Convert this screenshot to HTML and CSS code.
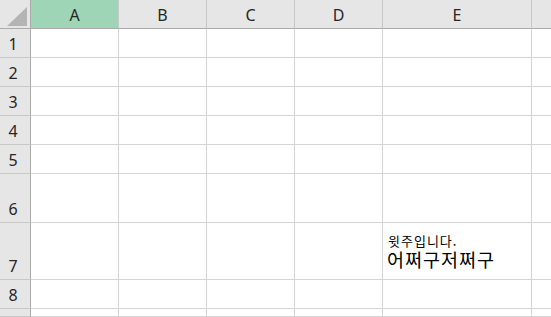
FILE: index.html
```html
<!doctype html>
<html lang="ko">
  <head>
    <meta charset="UTF-8" />
    <title>Sheet</title>
    <link rel="stylesheet" href="styles.css">
  </head>
  <body>
    <div class="sheet">
      <div class="corner"><span class="tri"></span></div>
      <div class="colhead active">A</div>
      <div class="colhead">B</div>
      <div class="colhead">C</div>
      <div class="colhead">D</div>
      <div class="colhead">E</div>
      <div class="colhead"></div>

      <div class="rowhead">1</div>
      <div class="cell"></div><div class="cell"></div><div class="cell"></div><div class="cell"></div><div class="cell"></div><div class="cell"></div>
      <div class="rowhead">2</div>
      <div class="cell"></div><div class="cell"></div><div class="cell"></div><div class="cell"></div><div class="cell"></div><div class="cell"></div>
      <div class="rowhead">3</div>
      <div class="cell"></div><div class="cell"></div><div class="cell"></div><div class="cell"></div><div class="cell"></div><div class="cell"></div>
      <div class="rowhead">4</div>
      <div class="cell"></div><div class="cell"></div><div class="cell"></div><div class="cell"></div><div class="cell"></div><div class="cell"></div>
      <div class="rowhead">5</div>
      <div class="cell"></div><div class="cell"></div><div class="cell"></div><div class="cell"></div><div class="cell"></div><div class="cell"></div>
      <div class="rowhead">6</div>
      <div class="cell"></div><div class="cell"></div><div class="cell"></div><div class="cell"></div><div class="cell"></div><div class="cell"></div>
      <div class="rowhead">7</div>
      <div class="cell"></div><div class="cell"></div><div class="cell"></div><div class="cell"></div>
      <div class="cell text">
        <span class="ruby">윗주입니다.</span>
        <span class="main">어쩌구저쩌구</span>
      </div>
      <div class="cell"></div>
      <div class="rowhead">8</div>
      <div class="cell"></div><div class="cell"></div><div class="cell"></div><div class="cell"></div><div class="cell"></div><div class="cell"></div>
      <div class="rowhead"></div>
      <div class="cell"></div><div class="cell"></div><div class="cell"></div><div class="cell"></div><div class="cell"></div><div class="cell"></div>
    </div>
  </body>
</html>
```

FILE: styles.css
```css
* {
  box-sizing: border-box;
}

body {
  margin: 0;
  background: #ffffff;
  font-family: "Noto Sans", "Noto Sans CJK KR", sans-serif;
  overflow: hidden;
}

.sheet {
  display: grid;
  grid-template-columns: 31px 88px 88px 88px 88px 149px 20px;
  grid-template-rows: 29px 29px 29px 29px 29px 29px 49px 57px 29px 8px;
}

.corner {
  background: #e6e6e6;
  border-right: 1px solid #ababab;
  border-bottom: 1px solid #ababab;
  position: relative;
}

.tri {
  position: absolute;
  left: 7px;
  top: 7px;
  width: 20px;
  height: 19px;
  background: #b4b4b4;
  clip-path: polygon(100% 0, 100% 100%, 0 100%);
}

.colhead {
  background: #e6e6e6;
  border-right: 1px solid #c8c8c8;
  border-bottom: 1px solid #ababab;
  display: flex;
  align-items: center;
  justify-content: center;
  font-size: 16px;
  color: #262626;
  padding-top: 1px;
}

.colhead.active {
  background: #9fd5b7;
}

.rowhead {
  background: #e6e6e6;
  border-right: 1px solid #ababab;
  border-bottom: 1px solid #c8c8c8;
  display: flex;
  align-items: flex-end;
  justify-content: center;
  font-size: 16px;
  color: #262626;
  line-height: 1;
  padding-bottom: 5px;
  padding-right: 4px;
}

.cell {
  border-right: 1px solid #d4d4d4;
  border-bottom: 1px solid #d4d4d4;
}

.text {
  display: flex;
  flex-direction: column;
  justify-content: flex-end;
  padding-left: 4px;
  padding-bottom: 9px;
  font-family: "Noto Sans CJK KR", sans-serif;
  color: #000000;
}

.ruby {
  font-size: 13px;
  line-height: 16px;
  padding-left: 1px;
  letter-spacing: 1px;
}

.main {
  font-size: 18.5px;
  line-height: 21px;
  letter-spacing: 1px;
}
```
